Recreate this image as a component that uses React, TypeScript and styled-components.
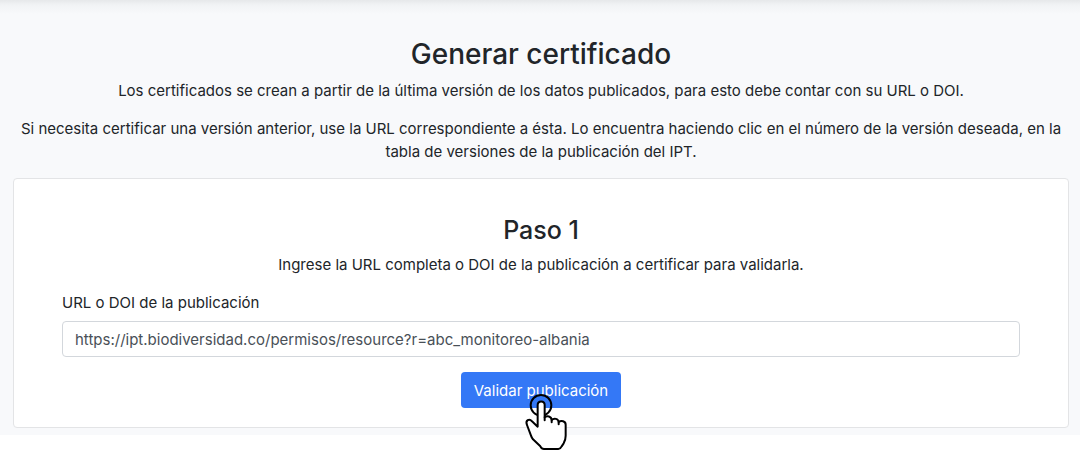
import React, { useState } from "react";
import styled, { createGlobalStyle } from "styled-components";

const GlobalStyle = createGlobalStyle`
  *, *::before, *::after { box-sizing: border-box; }
  body {
    margin: 0;
    background: #fff;
    color: #212529;
    font-family: Inter, "Liberation Sans", sans-serif;
    font-size: 15px;
    line-height: 23px;
  }
`;

const Page = styled.div`
  min-height: 100vh;
`;

const Section = styled.main`
  padding: 36px 11px 7px 13px;
  text-align: center;
  background: linear-gradient(#e6e8ea 0, #f1f3f5 5px, #f8f9fb 14px);
`;

const Title = styled.h1`
  margin: 0 0 7px;
  font-size: 28px;
  font-weight: 500;
  line-height: 36px;
`;

const Paragraph = styled.p`
  margin: 0 0 15px;
`;

const Card = styled.form`
  padding: 36px 48px 19px;
  background: #fff;
  border: 1px solid #e3e4e6;
  border-radius: 4px;
`;

const StepTitle = styled.h2`
  margin: 0 0 7px;
  font-size: 25px;
  font-weight: 500;
  line-height: 31px;
`;

const Field = styled.div`
  display: flex;
  flex-direction: column;
  gap: 7px;
  margin-bottom: 15px;
  text-align: left;
`;

const TextInput = styled.input`
  width: 100%;
  height: 36px;
  padding: 0 12px;
  color: #495057;
  font: inherit;
  background: #fff;
  border: 1px solid #d3d7dc;
  border-radius: 4px;
`;

const Action = styled.div`
  position: relative;
  display: inline-flex;
  vertical-align: top;
`;

const SubmitButton = styled.button`
  height: 36px;
  padding: 0 13px;
  color: #fff;
  font: inherit;
  background: #3478f6;
  border: 0;
  border-radius: 4px;
  cursor: pointer;
`;

const Pointer = styled.svg`
  position: absolute;
  top: 22px;
  left: 63px;
  width: 44px;
  height: 57px;
  pointer-events: none;
`;

function PointingHand() {
  return (
    <Pointer viewBox="42 27 132 171" aria-hidden="true">
      <g
        stroke="#000"
        strokeWidth="6"
        strokeLinecap="round"
        strokeLinejoin="round"
      >
        <circle cx="93" cy="61" r="31" fill="none" />
        <path
          d="M83 125V60c0-14 21-14 21 0v37c7-6 20-4 21 8 7-7 20-4 21 6 8-6 21-3 21 8v33c0 10-2 16-6 23l-6 9q-4 8-10 8H102q-7 0-11-8L69 163q-4-5-6-11L51 120c-6-14 7-21 15-11Z"
          fill="#fff"
        />
        <path d="M104 97v9M125 105v7M146 111v7" fill="none" />
      </g>
    </Pointer>
  );
}

export default function App() {
  const [url, setUrl] = useState(
    "https://ipt.biodiversidad.co/permisos/resource?r=abc_monitoreo-albania"
  );

  return (
    <Page>
      <GlobalStyle />
      <Section>
        <Title>Generar certificado</Title>
        <Paragraph>
          Los certificados se crean a partir de la última versión de los datos
          publicados, para esto debe contar con su URL o DOI.
        </Paragraph>
        <Paragraph>
          Si necesita certificar una versión anterior, use la URL
          correspondiente a ésta. Lo encuentra haciendo clic en el número de la
          versión deseada, en la tabla de versiones de la publicación del IPT.
        </Paragraph>
        <Card onSubmit={(event) => event.preventDefault()}>
          <StepTitle>Paso 1</StepTitle>
          <Paragraph>
            Ingrese la URL completa o DOI de la publicación a certificar para
            validarla.
          </Paragraph>
          <Field>
            <label htmlFor="publication-url">URL o DOI de la publicación</label>
            <TextInput
              id="publication-url"
              type="text"
              value={url}
              onChange={(event) => setUrl(event.target.value)}
            />
          </Field>
          <Action>
            <SubmitButton type="submit">Validar publicación</SubmitButton>
            <PointingHand />
          </Action>
        </Card>
      </Section>
    </Page>
  );
}
